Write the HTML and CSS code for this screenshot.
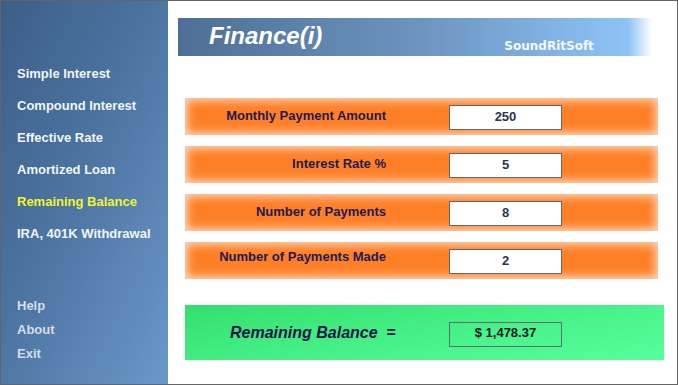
FILE: index.html
```html
<!DOCTYPE html>
<html lang="en">
<head>
    <meta charset="UTF-8">
    <title>Finance(i)</title>
    <link rel="stylesheet" href="styles.css">
</head>
<body>
    <div class="window">
        <div class="sidebar">
            <ul class="menu">
                <li>Simple Interest</li>
                <li>Compound Interest</li>
                <li>Effective Rate</li>
                <li>Amortized Loan</li>
                <li class="active">Remaining Balance</li>
                <li>IRA, 401K Withdrawal</li>
            </ul>
            <ul class="menu small">
                <li>Help</li>
                <li>About</li>
                <li>Exit</li>
            </ul>
        </div>
        <div class="main">
            <div class="header">
                <span class="title">Finance(i)</span>
                <span class="brand">SoundRitSoft</span>
            </div>
            <div class="row">
                <span class="label">Monthly Payment Amount</span>
                <div class="field">250</div>
            </div>
            <div class="row">
                <span class="label">Interest Rate %</span>
                <div class="field">5</div>
            </div>
            <div class="row">
                <span class="label">Number of Payments</span>
                <div class="field">8</div>
            </div>
            <div class="row">
                <span class="label up">Number of Payments Made</span>
                <div class="field">2</div>
            </div>
            <div class="result">
                <span class="result-label">Remaining Balance</span>
                <span class="eq">=</span>
                <div class="field out">$ 1,478.37</div>
            </div>
        </div>
    </div>
</body>
</html>
```

FILE: styles.css
```css
body {
    margin: 0;
    font-family: "Liberation Sans", Arial, sans-serif;
}
.window {
    width: 676px;
    height: 383px;
    border: 1px solid #646464;
    display: flex;
    background: #fff;
}
.sidebar {
    width: 167px;
    background: linear-gradient(115deg, #3c5e87 0%, #4b74a1 45%, #6a97ca 100%);
    display: flex;
    flex-direction: column;
    padding-top: 63px;
    box-sizing: border-box;
}
.menu {
    list-style: none;
    margin: 0;
    padding: 0 0 0 16px;
}
.menu li {
    font-weight: bold;
    font-size: 13px;
    color: #f2f4f8;
    height: 32px;
    line-height: 20px;
}
.menu li.active {
    color: #f4f42a;
}
.menu.small {
    margin-top: 40px;
}
.menu.small li {
    height: 24px;
    color: #d6dce8;
}
.main {
    flex: 1;
    padding: 17px 0 0 10px;
}
.header {
    width: 474px;
    height: 38px;
    background: linear-gradient(90deg, #4e6f95 0%, #6b93bf 50%, #8ec3f7 95%, #ffffff 100%);
    display: flex;
    align-items: center;
    box-sizing: border-box;
}
.title {
    font-size: 24px;
    font-weight: bold;
    font-style: italic;
    color: #fff;
    margin-left: 31px;
    margin-top: -3px;
}
.brand {
    font-family: "DejaVu Sans", sans-serif;
    font-size: 12px;
    font-weight: bold;
    color: #f4f8ff;
    margin-left: 182px;
    margin-top: 18px;
}
.row {
    width: 473px;
    height: 37px;
    margin: 11px 0 0 7px;
    background: #ff7f27;
    box-shadow: inset 0 0 8px 3px #ffd4b8;
    display: flex;
    align-items: center;
}
.header + .row {
    margin-top: 42px;
}
.label {
    width: 201px;
    text-align: right;
    font-size: 13px;
    font-weight: bold;
    color: #1c1c58;
    margin-top: -3px;
}
.label.up {
    margin-top: -8px;
}
.field {
    width: 113px;
    height: 25px;
    margin-left: 63px;
    margin-top: 1px;
    box-sizing: border-box;
    border: 1px solid #666;
    background: #fff;
    font-size: 13px;
    font-weight: bold;
    color: #2c3352;
    text-align: center;
    line-height: 21px;
}
.result {
    width: 479px;
    height: 55px;
    margin: 26px 0 0 7px;
    background: linear-gradient(170deg, #32df6e 0%, #45f186 50%, #55ff9c 100%);
    display: flex;
    align-items: center;
}
.result-label {
    font-size: 16px;
    font-weight: bold;
    font-style: italic;
    color: #14124a;
    margin-left: 45px;
}
.eq {
    font-size: 16px;
    font-weight: bold;
    color: #14124a;
    margin-left: 9px;
}
.field.out {
    margin-left: 53px;
    margin-top: 3px;
    background: transparent;
    border-color: #6a6a6a;
    color: #10162a;
    line-height: 19px;
}
```
